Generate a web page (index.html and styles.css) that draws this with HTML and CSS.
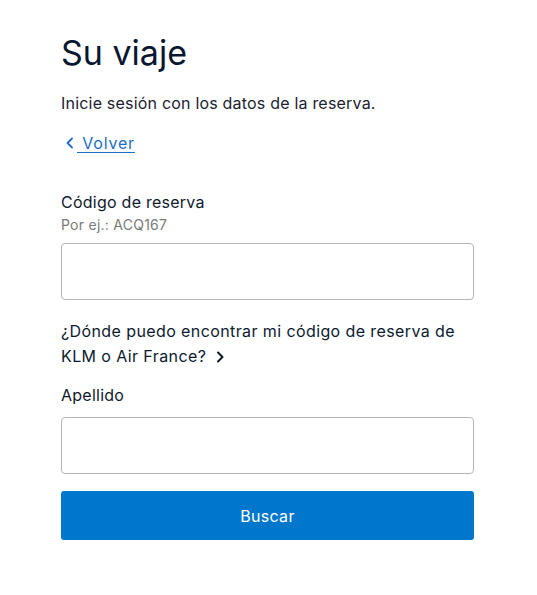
FILE: index.html
```html
<!DOCTYPE html>
<html lang="es">
<head>
<meta charset="utf-8">
<title>Su viaje</title>
<link rel="stylesheet" href="styles.css">
</head>
<body>
<main class="page">
  <h1 class="title">Su viaje</h1>
  <p class="intro">Inicie sesión con los datos de la reserva.</p>
  <a class="back" href="#">
    <svg class="back-icon" width="10" height="12" viewBox="0 0 10 12" aria-hidden="true"><path d="M7 1.5 L2.5 6 L7 10.5" fill="none" stroke="currentColor" stroke-width="1.8" stroke-linecap="round" stroke-linejoin="round"/></svg>
    <span class="back-text">&nbsp;Volver</span>
  </a>
  <label class="label label-first" for="code">Código de reserva</label>
  <div class="hint">Por ej.: ACQ167</div>
  <input class="field field-first" id="code" type="text">
  <a class="help" href="#">¿Dónde puedo encontrar mi código de reserva de KLM o Air France?<svg class="help-icon" width="12" height="12" viewBox="0 0 12 12" aria-hidden="true"><path d="M4 1.5 L8.5 6 L4 10.5" fill="none" stroke="currentColor" stroke-width="2" stroke-linecap="round" stroke-linejoin="round"/></svg></a>
  <label class="label label-second" for="name">Apellido</label>
  <input class="field field-second" id="name" type="text">
  <button class="submit" type="button">Buscar</button>
</main>
</body>
</html>
```
FILE: styles.css
```css
html, body {
  margin: 0;
  padding: 0;
  background: #ffffff;
}
body {
  font-family: Inter, "Noto Sans", sans-serif;
  color: #0b1a30;
  letter-spacing: 0.25px;
}
.page {
  display: flex;
  flex-direction: column;
  align-items: flex-start;
  width: 413px;
  padding: 31px 0 0 61px;
}
.title {
  margin: 0;
  font-size: 34px;
  line-height: 44px;
  font-weight: 400;
  letter-spacing: 0;
  color: #071631;
}
.intro {
  margin: 16px 0 0;
  font-size: 16px;
  line-height: 24px;
  letter-spacing: 0.2px;
  color: #1b2232;
}
.back {
  margin-top: 16px;
  display: flex;
  align-items: center;
  font-size: 16px;
  line-height: 24px;
  color: #1a6ec4;
  text-decoration: none;
}
.back-icon {
  margin-left: 4px;
  margin-right: 2px;
}
.back-text {
  letter-spacing: 0.8px;
  text-decoration: underline;
  text-underline-offset: 3px;
}
.label {
  font-size: 16px;
  line-height: 24px;
  color: #0f1a2c;
}
.label-first {
  margin-top: 35px;
}
.label-second {
  margin-top: 14px;
}
.hint {
  margin-top: 1px;
  font-size: 14px;
  line-height: 20px;
  color: #7a7a7a;
}
.field {
  box-sizing: border-box;
  width: 413px;
  height: 57px;
  border: 1px solid #b5b5b5;
  border-radius: 4px;
  background: #ffffff;
  padding: 0 12px;
  font: inherit;
}
.field-first {
  margin-top: 8px;
}
.field-second {
  margin-top: 10px;
}
.help {
  margin-top: 19px;
  font-size: 16px;
  line-height: 25px;
  letter-spacing: 0.4px;
  color: #0b1a30;
  text-decoration: none;
}
.help-icon {
  margin-left: 8px;
  vertical-align: -1px;
}
.submit {
  margin-top: 17px;
  width: 413px;
  height: 49px;
  border: none;
  border-radius: 3px;
  background: #0077cc;
  color: #ffffff;
  font-family: inherit;
  font-size: 16px;
  letter-spacing: 0.3px;
  cursor: pointer;
}
```
